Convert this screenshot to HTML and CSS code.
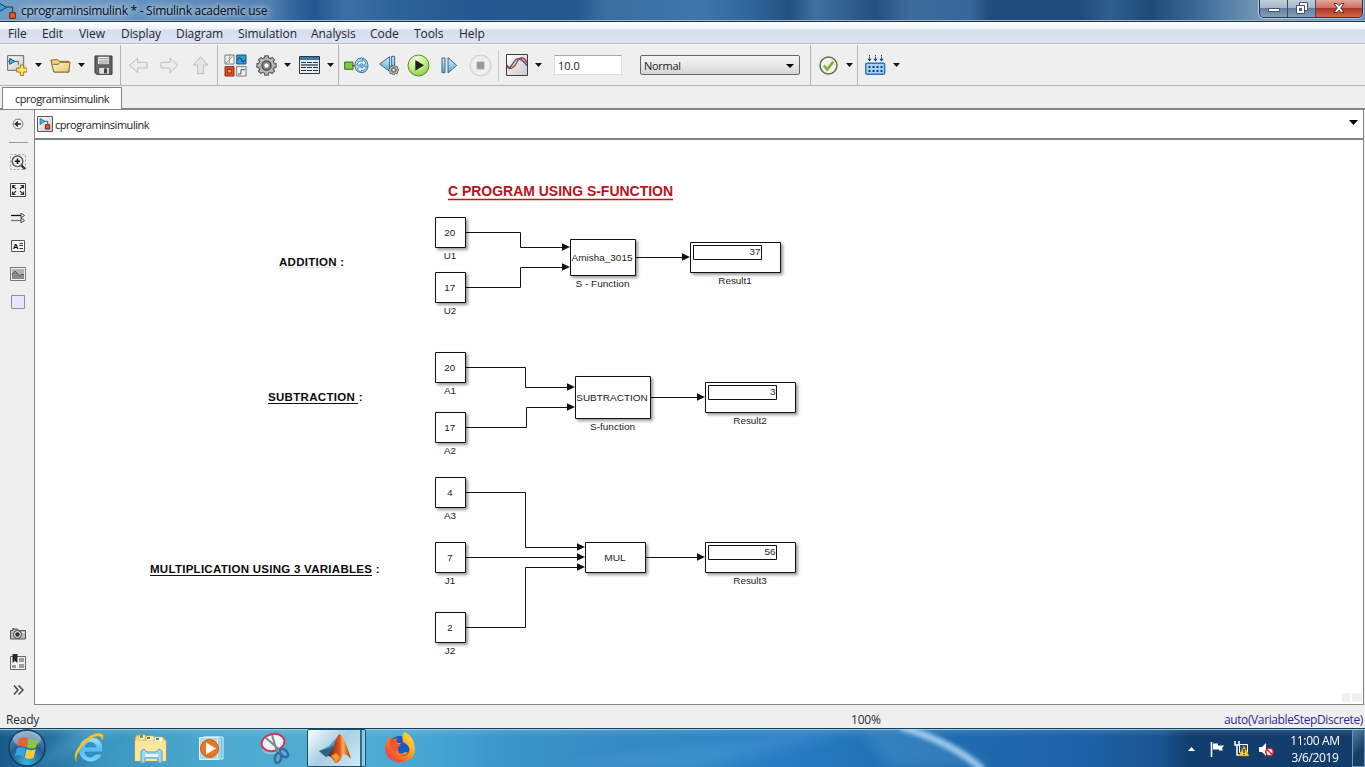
FILE: index.html
```html
<!DOCTYPE html>
<html lang="en">
<head>
<meta charset="utf-8">
<title>cprograminsimulink * - Simulink academic use</title>
<link rel="stylesheet" href="styles.css">
</head>
<body>
<svg class="defs" width="0" height="0" aria-hidden="true">
  <defs>
    <linearGradient id="gBlue" x1="0" y1="0" x2="0" y2="1"><stop offset="0" stop-color="#d8effa"/><stop offset="1" stop-color="#5fa5d3"/></linearGradient>
    <linearGradient id="gGrey" x1="0" y1="0" x2="1" y2="1"><stop offset="0" stop-color="#ffffff"/><stop offset="1" stop-color="#c9c9c9"/></linearGradient>
    <linearGradient id="gFold" x1="0" y1="0" x2="1" y2="1"><stop offset="0" stop-color="#fffbe0"/><stop offset="1" stop-color="#e9c56a"/></linearGradient>
    <radialGradient id="gPlay" cx=".4" cy=".25" r=".8"><stop offset="0" stop-color="#f7ffe8"/><stop offset=".5" stop-color="#c6f088"/><stop offset="1" stop-color="#83c83f"/></radialGradient>
    <symbol id="caret" viewBox="0 0 7 4"><path d="M0 0h7L3.5 4z" fill="#151515"/></symbol>
    <symbol id="model" viewBox="0 0 48 48">
      <path d="M1.500 1.500h45v45h-45z" fill="url(#gGrey)" stroke="#4d5a63" stroke-width="3"/>
      <path d="M9 7v19l15-10z" fill="#57b0dd" stroke="#17577d" stroke-width="2"/>
      <path d="M24 16h8v10" fill="none" stroke="#27648a" stroke-width="3"/>
      <path d="M25 26h13v13H25z" fill="#e2582c" stroke="#7e2810" stroke-width="3"/>
    </symbol>
    <symbol id="gear" viewBox="-32 -32 64 64">
      <g fill="#4a4a4a"><circle r="26"/><path id="tooth" d="M-7-31H7V31H-7z"/><use href="#tooth" transform="rotate(45)"/><use href="#tooth" transform="rotate(90)"/><use href="#tooth" transform="rotate(135)"/></g>
      <g fill="#b9b9b9"><circle r="23"/><path id="toothIn" d="M-4-28H4V28H-4z"/><use href="#toothIn" transform="rotate(45)"/><use href="#toothIn" transform="rotate(90)"/><use href="#toothIn" transform="rotate(135)"/></g>
      <circle r="14" fill="#8d8d8d" stroke="#444" stroke-width="4"/><circle r="8" fill="#fff" stroke="#555" stroke-width="2"/>
    </symbol>
  </defs>
</svg>

<div class="window">
  <header class="titlebar">
    <svg class="app-icon" width="17" height="20" viewBox="0 0 51 60"><path d="M-6 8l26 14L-6 37z" fill="#3d9fd4" stroke="#0b4268" stroke-width="3"/><path d="M21 21h17v17" fill="none" stroke="#153a55" stroke-width="3"/><path d="M29 38h17v17H29z" fill="#e95a28" stroke="#6d1f0d" stroke-width="3"/></svg>
    <h1 class="title">cprograminsimulink * - Simulink academic use</h1>
    <div class="win-buttons">
      <button class="wb" aria-label="Minimize"><svg width="12" height="6" viewBox="0 0 12 6"><path d="M.5 1.500h11v3H.5z" fill="#fff" stroke="#4a5361"/></svg></button>
      <button class="wb" aria-label="Restore"><svg width="12" height="12" viewBox="0 0 12 12"><path d="M3.500.5h8v8h-8z" fill="#fff" stroke="#4a5361"/><path d="M.5 3.500h8v8h-8z" fill="#fff" stroke="#4a5361"/><path d="M3.500 6.500h2v2h-2z" fill="#5b6a80" stroke="#4a5361"/></svg></button>
      <button class="wb close" aria-label="Close"><svg width="12" height="10" viewBox="0 0 12 10"><path d="M1 .5h3l2 2.300L8 .5h3L7.800 5 11 9.500H8L6 7.200 4 9.500H1L4.200 5z" fill="#fff" stroke="#5d2a2c"/></svg></button>
    </div>
  </header>

  <nav class="menubar">
    <span>File</span><span>Edit</span><span>View</span><span>Display</span><span>Diagram</span><span>Simulation</span><span>Analysis</span><span>Code</span><span>Tools</span><span>Help</span>
  </nav>

  <div class="toolbar">
    <svg width="20" height="21" viewBox="20 164 60 63"><path d="M22 166h48v44H22z" fill="url(#gGrey)" stroke="#666" stroke-width="3"/><path d="M28 174v18l16-9z" fill="#57b0dd" stroke="#17577d" stroke-width="3"/><path d="M44 183h10v10M22 183h6" fill="none" stroke="#27648a" stroke-width="3"/><path d="M60 194h10v9h10v12H70v10H60v-10H49v-12h11z" fill="#ffe36a" stroke="#a37a14" stroke-width="3"/></svg>
    <svg class="caret"><use href="#caret"/></svg>
    <svg width="21" height="15" viewBox="148 174 63 45"><path d="M151 180l20-1 4 5h30v32h-45z" fill="#f1cf7a" stroke="#8a6d28" stroke-width="3"/><path d="M151 181l8 35h45l4-29h-30l-5 6h-17" fill="url(#gFold)" stroke="#8a6d28" stroke-width="3"/></svg>
    <svg class="caret"><use href="#caret"/></svg>
    <svg width="19" height="20" viewBox="280 166 57 60"><path d="M283 169h51v55h-46l-5-5z" fill="#686868" stroke="#333" stroke-width="3"/><path d="M291 170h35v25h-35z" fill="#fff" stroke="#333" stroke-width="2"/><path d="M295 177h28M295 184h28M295 190h28" stroke="#666" stroke-width="2.500"/><path d="M294 203h32v21h-32z" fill="#ddd" stroke="#333" stroke-width="2"/><path d="M310 206h9v15h-9z" fill="#444"/></svg>
    <i class="sep"></i>
    <svg width="19" height="17" viewBox="386 170 57 51"><path d="M388 195l24-22v13h28v17h-28v14z" fill="#ececec" stroke="#bdbdbd" stroke-width="3"/></svg>
    <svg width="19" height="17" viewBox="478 170 57 51"><path d="M532 195l-24-22v13h-27v17h27v14z" fill="#ececec" stroke="#bdbdbd" stroke-width="3"/></svg>
    <svg width="17" height="19" viewBox="574 168 51 57"><path d="M600 170l22 25h-13v26h-18v-26h-14z" fill="#e4e4e4" stroke="#bdbdbd" stroke-width="3"/></svg>
    <i class="sep"></i>
    <svg width="23" height="23" viewBox="671 161 69 69"><path d="M674 164h27v27h-27zM709 199h28v28h-28z" fill="#f5f5f5" stroke="#777" stroke-width="3"/><path d="M674 191l13-12 12-15M687 164v24" fill="none" stroke="#888" stroke-width="2.500"/><path d="M709 164h28v27h-28z" fill="#2e9ad6" stroke="#1a5a86" stroke-width="3"/><path d="M712 178q6-13 11 0t12 0" fill="none" stroke="#08304d" stroke-width="3"/><path d="M674 199h27v28h-27z" fill="#e54e22" stroke="#8a2a10" stroke-width="3"/><path d="M682 207h11v11h-11z" fill="#f9a587" stroke="#8a2a10" stroke-width="3"/><path d="M713 221h9v-13h12" fill="none" stroke="#555" stroke-width="3"/></svg>
    <svg width="21" height="21"><use href="#gear"/></svg>
    <svg class="caret"><use href="#caret"/></svg>
    <svg width="21" height="19" viewBox="0 0 21 19"><path d="M.5.5h20v17H.5z" fill="#e7eef4" stroke="#2d3740"/><path d="M1 1h19v3H1z" fill="#3b79ad"/><path d="M2 6.500h17M2 11.500h17M2 14.500h17" stroke="#26323c" stroke-dasharray="5 1"/><path d="M2 8h17v2H2z" fill="#6c7a88"/></svg>
    <svg class="caret"><use href="#caret"/></svg>
    <i class="sep"></i>
    <svg width="25" height="17" viewBox="1031 169 75 51"><path d="M1033 184h25v22h-25z" fill="#7ec843" stroke="#39701a" stroke-width="3"/><path d="M1056 195h8" stroke="#333" stroke-width="3"/><path d="M1064 190q3-18 20-18q18 2 19 23-1 19-18 21-18-1-21-16z" fill="#a5d0ee" stroke="#3b789f" stroke-width="3"/><path d="M1070 192q3-12 17-10v-6l10 11-10 9v-7q-8-1-10 5zM1098 197q-1 14-16 12v6l-11-10 11-10v7q7 1 9-5z" fill="#e9f7ff" stroke="#28638c" stroke-width="2"/></svg>
    <svg width="20" height="21" viewBox="1136 167 60 63"><path d="M1168 172v44l-30-22zM1174 171h9v36h-9z" fill="url(#gBlue)" stroke="#31698f" stroke-width="3"/><svg x="1164" y="196" width="32" height="32"><use href="#gear"/></svg></svg>
    <svg width="23" height="23" viewBox="1219 161 69 69"><circle cx="1253.500" cy="195.500" r="31.500" fill="url(#gPlay)" stroke="#5d8a36" stroke-width="3"/><path d="M1244 179v32l26-16z" fill="#202020"/></svg>
    <svg width="17" height="17" viewBox="1321 170 51 51"><path d="M1324 173h9v44h-9zM1342 172v46l26-23z" fill="url(#gBlue)" stroke="#31698f" stroke-width="3"/></svg>
    <svg width="23" height="23" viewBox="0 0 23 23"><circle cx="11.500" cy="11.500" r="10.500" fill="#e9e9e9" stroke="#cdcdcd"/><circle cx="11.500" cy="11.500" r="8.500" fill="#f0f0f0"/><path d="M8 8h7v7H8z" fill="#999" stroke="#ababab"/></svg>
    <i class="sep short"></i>
    <svg width="23" height="23" viewBox="0 0 23 23"><path d="M.5.5h21v21H.5z" fill="url(#gGrey)" stroke="#3c3c3c"/><path d="M1 11q2 5 5 0t4.500-6 5 1 5.500 6" fill="none" stroke="#365fa5" stroke-width="1.500"/><path d="M1 11.500q1.500 4.500 5 2.500t5-6 5-4q3 0 5 5" fill="none" stroke="#bd3430" stroke-width="1.400"/></svg>
    <svg class="caret"><use href="#caret"/></svg>
    <div class="stop-time">10.0</div>
    <div class="mode"><span>Normal</span><svg width="8" height="4" viewBox="0 0 8 4"><path d="M0 0h8L4 4z"/></svg></div>
    <i class="sep"></i>
    <svg width="19" height="19" viewBox="0 0 19 19"><circle cx="9.500" cy="9.500" r="8.500" fill="#f0f2e9" stroke="#61704e" stroke-width="1.500"/><path d="M5 9.500l3.300 4 6-8" fill="none" stroke="#86ac40" stroke-width="2.600"/></svg>
    <svg class="caret"><use href="#caret"/></svg>
    <i class="sep"></i>
    <svg width="21" height="20" viewBox="0 0 21 20"><path d="M4.500 0v6M10.500 0v6M16.500 0v6" stroke="#17446a" stroke-dasharray="1.500 .7"/><path d="M2.500 3.800h4l-2 2.800zM8.500 3.800h4l-2 2.800zM14.500 3.800h4l-2 2.800z" fill="#123c60"/><rect x=".7" y="8.200" width="19" height="11" rx="1.500" fill="#a5d1f5" stroke="#2677bf" stroke-width="1.400"/><path d="M3.500 12h14M3.500 16h14" stroke="#163e6b" stroke-width="2" stroke-dasharray="2 2"/></svg>
    <svg class="caret"><use href="#caret"/></svg>
  </div>

  <div class="tabs"><div class="tab">cprograminsimulink</div></div>

  <main class="editor">
    <aside class="palette">
      <svg width="12" viewBox="0 0 12 12"><circle cx="6" cy="6" r="4.900" fill="#f8f8f8" stroke="#777"/><path d="M9 6H4M6 3.500L3.300 6 6 8.500" fill="none" stroke="#222" stroke-width="1.500"/></svg>
      <i class="rule"></i>
      <svg width="16" viewBox="0 0 16 16"><path d="M.5.5h15v15H.5z" fill="none" stroke="#999" stroke-dasharray="2 2"/><path d="M10.500 10.500l4.500 4.500" stroke="#333" stroke-width="2.400"/><circle cx="7.500" cy="7.300" r="5.300" fill="#f8f8f8" stroke="#555" stroke-width="1.400"/><path d="M4.800 7.300h5.400M7.500 4.600V10" stroke="#111" stroke-width="1.600"/></svg>
      <svg width="16" viewBox="0 0 16 14"><path d="M.5.500h15v13H.5z" fill="#fafafa" stroke="#444"/><path d="M2.500 5.500v-3h3M10.500 2.500h3v3M13.500 8.500v3h-3M5.500 11.500h-3v-3M3 3l3 3M13 3l-3 3M3 11l3-3M13 11l-3-3" fill="none" stroke="#333" stroke-width="1.200"/></svg>
      <svg width="16" viewBox="0 0 16 12"><path d="M1 3.500h11" stroke="#111" stroke-width="1.300"/><path d="M1 8.500h11" stroke="#777" stroke-width="1.300"/><path d="M11 1.200l3.500 2.300L11 5.800zM11 6.200l3.500 2.300-3.500 2.300z" fill="#fff" stroke="#444"/></svg>
      <svg width="14" viewBox="0 0 14 12"><path d="M.5.5h13v11H.5z" fill="#f8f8f8" stroke="#555"/><text x="1.800" y="9" class="pal-a">A</text><path d="M8.500 3.500H12M8.500 5.500H12M8.500 8.500H12" stroke="#333"/></svg>
      <svg width="16" viewBox="0 0 16 14"><path d="M.5.5h15v13H.5z" fill="#f2f2f2" stroke="#777"/><path d="M2 2h12v10H2z" fill="#b2b2b2"/><path d="M2 8q2.500-6 5-2t3 2.500 4-1V12H2z" fill="#8b8b8b"/><path d="M2 8q2.500-6 5-2t3 2.500 4-1" fill="none" stroke="#555"/></svg>
      <svg width="14" viewBox="0 0 14 14"><path d="M.5.5h13v13H.5z" fill="#e8e6fa" stroke="#8f8fa3"/></svg>
      <span class="spring"></span>
      <svg width="16" viewBox="0 0 16 12"><path d="M.5 2.500h2l1-1.500h4l1 1.500h7v8.500H.5z" fill="#bbb" stroke="#555"/><path d="M2 .8h2" stroke="#444"/><circle cx="7.500" cy="6.500" r="4" fill="#ddd" stroke="#444"/><circle cx="7.500" cy="6.500" r="2.200" fill="#333"/><path d="M12.500 4.500h2" stroke="#fff"/></svg>
      <svg width="16" viewBox="0 0 16 16"><path d="M.5 2.500h15v13H.5z" fill="#f4f4f4" stroke="#666"/><path d="M9 4h5v4H9zM9 10h5v4H9zM2 11h4v3H2z" fill="#9c9c9c"/><path d="M2.500 0h5v9L5 7 2.500 9z" fill="#2a2a2a"/></svg>
      <svg width="11" viewBox="0 0 11 11"><path d="M1 1l4 4.500L1 10M5.500 1l4.500 4.500L5.500 10" fill="none" stroke="#444" stroke-width="1.500"/></svg>
    </aside>

    <section class="model-pane">
      <div class="crumb">
        <svg width="16" height="16"><use href="#model"/></svg>
        <span>cprograminsimulink</span>
        <svg class="crumb-caret" width="9" height="5" viewBox="0 0 9 5"><path d="M0 0h9L4.500 5z"/></svg>
      </div>
      <svg class="canvas" viewBox="35 140 1328 564" width="1328" height="564">
        <g class="headings">
          <text x="448" y="196" textLength="225" lengthAdjust="spacingAndGlyphs" class="h-main">C PROGRAM USING S-FUNCTION</text>
          <path d="M448 199.500h225" stroke="#c01414" stroke-width="1.400"/>
          <text x="279" y="266" textLength="65">ADDITION :</text>
          <path d="M279 267.500h61" stroke="#ddd"/>
          <text x="268" y="401" textLength="94.500">SUBTRACTION :</text>
          <path d="M268 403.500h90M150 575.500h222" stroke="#111"/>
          <text x="150" y="573" textLength="229.500">MULTIPLICATION USING 3 VARIABLES :</text>
        </g>
        <g class="wires">
          <path d="M466 232.500h54.500v15H564M466 287.500h54.500v-20H564M636 257.500h48"/>
          <path d="M466 367.500h59.500v20H569M466 427.500h60.500v-20H569M651 397.500h48"/>
          <path d="M466 492.500h59.500v55H579M466 557.500h113M466 627.500h59.500v-60H579M646 557.500h53"/>
        </g>
        <path class="arrows" d="M562 243.300l8 3.700-8 3.700zM562 263.300l8 3.700-8 3.700zM682 253.300l8 3.700-8 3.700zM567 383.300l8 3.700-8 3.700zM567 403.300l8 3.700-8 3.700zM697 393.300l8 3.700-8 3.700zM577 543.300l8 3.700-8 3.700zM577 553.300l8 3.700-8 3.700zM577 563.300l8 3.700-8 3.700zM697 553.300l8 3.700-8 3.700z"/>
        <g class="blocks">
          <path d="M435.500 217.500h30v30h-30zM435.500 272.500h30v30h-30zM435.500 352.500h30v30h-30zM435.500 412.500h30v30h-30zM435.500 477.500h30v30h-30zM435.500 542.500h30v30h-30zM435.500 612.500h30v30h-30z"/>
          <path d="M570.500 239.500h65v36h-65zM575.500 376.500h75v42h-75zM585.500 542.500h60v30h-60zM690.500 242.500h90v30h-90zM705.500 382.500h90v30h-90zM705.500 542.500h90v30h-90z"/>
        </g>
        <path class="displays" d="M693.500 245.500h68v14h-68zM708.500 385.500h68v14h-68zM708.500 545.500h68v14h-68z"/>
        <g class="labels">
          <text x="449.800" y="236" textLength="11" lengthAdjust="spacingAndGlyphs">20</text><text x="450" y="259" textLength="12.500" lengthAdjust="spacingAndGlyphs">U1</text>
          <text x="449.800" y="291" textLength="11" lengthAdjust="spacingAndGlyphs">17</text><text x="450" y="314" textLength="12.500" lengthAdjust="spacingAndGlyphs">U2</text>
          <text x="449.800" y="371" textLength="11" lengthAdjust="spacingAndGlyphs">20</text><text x="450" y="394" textLength="12" lengthAdjust="spacingAndGlyphs">A1</text>
          <text x="449.800" y="431" textLength="11" lengthAdjust="spacingAndGlyphs">17</text><text x="450" y="454" textLength="12" lengthAdjust="spacingAndGlyphs">A2</text>
          <text x="449.800" y="496">4</text><text x="450" y="519" textLength="12" lengthAdjust="spacingAndGlyphs">A3</text>
          <text x="449.800" y="561">7</text><text x="450" y="584" textLength="10.500" lengthAdjust="spacingAndGlyphs">J1</text>
          <text x="449.800" y="631">2</text><text x="450" y="654" textLength="10.500" lengthAdjust="spacingAndGlyphs">J2</text>
          <text x="602" y="261" textLength="61" lengthAdjust="spacingAndGlyphs">Amisha_3015</text><text x="602.500" y="287" textLength="54" lengthAdjust="spacingAndGlyphs">S - Function</text>
          <text x="612" y="401" textLength="71.500" lengthAdjust="spacingAndGlyphs">SUBTRACTION</text><text x="612.500" y="430" textLength="45" lengthAdjust="spacingAndGlyphs">S-function</text>
          <text x="615" y="561" textLength="21.500" lengthAdjust="spacingAndGlyphs">MUL</text>
          <text x="735" y="284" textLength="33.500" lengthAdjust="spacingAndGlyphs">Result1</text><text x="750" y="424" textLength="33.500" lengthAdjust="spacingAndGlyphs">Result2</text><text x="750" y="584" textLength="33.500" lengthAdjust="spacingAndGlyphs">Result3</text>
          <text x="755" y="255" textLength="11" lengthAdjust="spacingAndGlyphs">37</text><text x="773" y="395">3</text><text x="770" y="555" textLength="11" lengthAdjust="spacingAndGlyphs">56</text>
        </g>
        <path d="M1342 693h8v9h-8zM1352 693h10v9h-10z" fill="#efefef"/>
      </svg>
    </section>
  </main>

  <footer class="status"><span>Ready</span><span class="zoom">100%</span><span class="solver">auto(VariableStepDiscrete)</span></footer>
</div>

<div class="taskbar">
  <svg class="streaks" viewBox="0 0 1365 39" preserveAspectRatio="none">
    <defs><filter id="soft"><feGaussianBlur stdDeviation="2"/></filter><filter id="wide" x="-20%" width="140%"><feGaussianBlur stdDeviation="6"/></filter></defs>
    <g filter="url(#wide)"><path d="M30 39L80 0h40L40 39z" fill="#7cc4e6" opacity=".25"/><path d="M560 39L800 0h70L700 39z" fill="#8bcdf2" opacity=".14"/><path d="M860 0h60l70 39H890z" fill="#67a6dc" opacity=".3"/></g>
    <path d="M901-2q52 16 82 44" fill="none" stroke="#b4daf8" stroke-width="7" opacity=".85" filter="url(#soft)"/>
  </svg>
  <div class="apps">
    <svg width="38" height="38" viewBox="0 0 38 38"><defs><radialGradient id="orb" cx=".5" cy=".9" r=".9"><stop offset="0" stop-color="#35b5e4"/><stop offset=".55" stop-color="#245c8d"/><stop offset="1" stop-color="#6d9bbd"/></radialGradient></defs><circle cx="19" cy="19" r="18" fill="url(#orb)" stroke="#153c5d" stroke-width="1.500"/><ellipse cx="19" cy="10" rx="14" ry="8" fill="#fff" opacity=".32"/><path d="M11 10q4.500-3 9-.5l-2 8.500q-4.500-2.500-9 0z" fill="#ec612c"/><path d="M21 10q5 2.500 9 0l-2 8.500q-4 2-9 0z" fill="#8cc83c"/><path d="M8.700 19.500q4.500-2.500 9 0l-2 8.500q-4.500-3-9-.5z" fill="#3aa0e8"/><path d="M18.700 20q5 2.500 9 0l-2 8.500q-4 2.500-9 0z" fill="#fccc36"/></svg>
    <svg width="32" height="32" viewBox="0 0 32 32"><defs><linearGradient id="ie" x1="0" y1="0" x2="0" y2="1"><stop offset="0" stop-color="#a4e6ff"/><stop offset=".5" stop-color="#55bdf3"/><stop offset="1" stop-color="#7ad4fa"/></linearGradient></defs><path d="M17.500 5A12.500 12.500 0 1 0 29.500 22H22.500Q20.500 25 17.500 25 12.500 25 12 20H30Q31 5 17.500 5zM12.200 15Q13 10.500 17.500 10.500T23 15z" fill="url(#ie)" fill-rule="evenodd" stroke="#2b84c4" stroke-width=".8"/><path d="M4 30Q-2 24 8 12T28 1.500q4 1 1 7 0-5-5-4.500Q15 6 8 16T4 30z" fill="#f9cd30" stroke="#d29b18" stroke-width=".6"/></svg>
    <svg width="33" height="32" viewBox="0 0 33 32"><path d="M1 6l2-3h8l2 3h17l2 3v20H1z" fill="#f4d981" stroke="#c79a3f"/><path d="M5 3h6v5H5zM12 4h8v5h-8zM20 5h9v5h-9z" fill="#fff9dc" stroke="#cfae5c" stroke-width=".7"/><path d="M6 3h3v3H6z" fill="#4caf32"/><path d="M13 5h3v2h-3z" fill="#d4532b"/><path d="M22 6h3v2h-3z" fill="#3481bc"/><path d="M1 9h31v20H1z" fill="#fbe8a0" opacity=".85"/><path d="M7 31V19l3-2 3 3h9l3-3 3 2v12h-4v-5H11v5z" fill="#9bd6f2" stroke="#5b9fc7"/><path d="M11 22h13v3H11z" fill="#e1f5fd"/></svg>
    <svg width="26" height="26" viewBox="0 0 26 26"><path d="M6 2h18v22H6z" fill="#78bedf" stroke="#d8f1fb"/><path d="M4 2h17v22H4z" fill="#8bcbe7" stroke="#c4e9f7"/><path d="M.5 2.500h18v22H.5z" fill="#add9ec" stroke="#def3fb"/><circle cx="10.500" cy="13.500" r="9" fill="#ee7420" stroke="#cc5b12"/><path d="M7 7.500v12l10-6z" fill="#fff"/></svg>
    <svg width="32" height="33" viewBox="0 0 32 33"><path d="M2 17q2 7 13 5l8-4V9z" fill="#adcbd9" opacity=".7"/><ellipse cx="13" cy="10.500" rx="11.500" ry="8.500" transform="rotate(-12 13 10.500)" fill="#f0f5fa" stroke="#cf3852" stroke-width="2"/><path d="M6 6l15 13M12 3l6 20" stroke="#788792" stroke-width="2"/><ellipse cx="24" cy="21" rx="3" ry="5" transform="rotate(-45 24 21)" fill="#6ba9cf" stroke="#2c70a7" stroke-width="2.600"/><ellipse cx="18" cy="26" rx="3" ry="5" transform="rotate(12 18 26)" fill="#6ba9cf" stroke="#2c70a7" stroke-width="2.600"/></svg>
    <div class="active-app">
      <svg width="32" height="31" viewBox="0 0 32 31"><defs><linearGradient id="peak"><stop offset="0" stop-color="#5e2218"/><stop offset=".5" stop-color="#e05420"/><stop offset=".65" stop-color="#ffad52"/><stop offset="1" stop-color="#a32b13"/></linearGradient></defs><path d="M0 18l10-5 7-8-5 17-5 2z" fill="#4b9dcc"/><path d="M0 18l7 6 5-3 3-9-5 3z" fill="#2b648c"/><path d="M21 1q-3 0-7 14l-5 8q4 0 7 7 5 0 8-9 4 0 8 5Q26 5 21 1z" fill="url(#peak)"/><path d="M12 23q3 2 4 7 3-1 5-6l-4-4z" fill="#f39a2b"/></svg>
    </div>
    <svg width="32" height="33" viewBox="0 0 32 33"><defs><linearGradient id="fox" x1="1" y1="0" x2="0" y2="1"><stop offset="0" stop-color="#fff04a"/><stop offset=".45" stop-color="#ff9818"/><stop offset="1" stop-color="#e9234e"/></linearGradient></defs><circle cx="16" cy="16" r="12" fill="#145bc2"/><path d="M19 10q-2-8 2-10 8 5 9 12 3 9-4 15-10 7-20 0Q-2 19 3 9l3-5 2 4 5-2q-3 3 1 5h3l-4 4 1 2q0 6 5 4 3-2 5 0-4 4-9 2 7 3 10-3 2-6-6-10z" fill="url(#fox)"/><path d="M6 5l3 3 5-1q-3 3 0 5l3 1-4 3 1 2-3 2q-7-3-5-15z" fill="#f55429"/></svg>
  </div>
  <div class="tray">
    <svg width="7" height="4" viewBox="0 0 7 4"><path d="M0 4l3.500-4L7 4z" fill="#fff"/></svg>
    <svg width="15" height="15" viewBox="0 0 15 15"><path d="M1.500 0v15" stroke="#fff" stroke-width="1.600"/><path d="M3 1.500h5v2h6l-2 3 1 2H9v-1H3z" fill="#fff"/></svg>
    <svg width="15" height="16" viewBox="0 0 15 16"><path d="M5.500 3.500h8v8h-8z" fill="#34516c" stroke="#fff"/><path d="M1 0v4h4V0M3 4v10h5" fill="none" stroke="#fff" stroke-width="1.500"/><path d="M10 5l5 10H5z" fill="#ffd42c" stroke="#a58210" stroke-width=".6"/><path d="M10 8v4M10 13v1" stroke="#222" stroke-width="1.300"/></svg>
    <svg width="15" height="15" viewBox="0 0 15 15"><path d="M0 5h3l4-4v13l-4-4H0z" fill="#fff"/><circle cx="10.500" cy="10" r="3.700" fill="#fff" stroke="#d7272d" stroke-width="1.600"/><path d="M8 7.500l5 5" stroke="#d7272d" stroke-width="1.600"/></svg>
  </div>
  <div class="clock"><span>11:00 AM</span><span>3/6/2019</span></div>
  <div class="peek"></div>
</div>
</body>
</html>
```
FILE: styles.css
```css
* { box-sizing: border-box; }
body {
  margin: 0;
  width: 1365px;
  height: 767px;
  overflow: hidden;
  background: #efefef;
  color: #1c1c1c;
  font-family: "Open Sans", "Noto Sans", sans-serif;
  font-size: 12px;
}
svg { display: block; }
.defs { position: absolute; }
.window { display: flex; flex-direction: column; height: 728px; }

.titlebar {
  display: flex;
  align-items: flex-start;
  height: 22px;
  border-bottom: 1px solid #1c3450;
  box-shadow: inset 0 -1px #9ab4cf;
  background:
    linear-gradient(90deg, #6f9cc6 0, #6594c0 120px, #4e80b3 270px, #2d6098 300px, #245890 315px, #3b6fa5 345px, #2d6298 400px, #24578f 480px, #24588e 575px, #396e9f 605px, #4076a8 700px, #30669a 750px, #24517f 790px, #40709f 815px, #25507f 875px, #3c6b9c 910px, #386899 970px, #204b7c 990px, #1f4b7d 1080px, #305f8f 1110px, #1f4a78 1150px, #3d6c98 1200px, #7698b7 1260px, #668caf 1365px);
}
.title {
  margin: 2px 0 0 4px;
  padding: 0;
  font-size: 12px;
  font-weight: 400;
  line-height: 18px;
  color: #0b0b10;
  letter-spacing: -.28px;
  text-shadow: 0 0 6px rgba(220, 235, 248, .9), 0 0 10px rgba(220, 235, 248, .8), 0 0 14px rgba(220, 235, 248, .6);
}
.win-buttons {
  display: flex;
  width: 104px;
  height: 18px;
  margin-left: auto;
  margin-right: 2px;
  border: 1px solid #26364a;
  border-top: 0;
  border-radius: 0 0 5px 5px;
  overflow: hidden;
  box-shadow: 0 0 0 1px rgba(215, 230, 243, .65);
}
.wb {
  display: flex;
  align-items: center;
  justify-content: center;
  width: 28px;
  padding: 0 0 2px;
  border: 0;
  border-right: 1px solid #334c68;
  background: linear-gradient(#c1cedb, #a6b8ca 45%, #637f9f 50%, #859fb9);
}
.wb:first-child { padding-top: 4px; }
.wb.close { flex: 1; border: 0; background: linear-gradient(#e2a89b, #cb7163 45%, #b23322 50%, #cf6a49); }

.menubar {
  display: grid;
  grid-template-columns: 34px 37px 42px 55px 62px 73px 59px 44px 45px 40px;
  height: 22px;
  padding-left: 8px;
  line-height: 23px;
  border-bottom: 1px solid #b6b9c0;
  background: linear-gradient(#fff 0, #eff2f8 7px, #d5deed 8px, #dde4f6 21px);
  color: #26262e;
  letter-spacing: -.07px;
}

.toolbar {
  display: grid;
  grid-template-columns: 28px 15px 28px 16px 26px 9px 31px 32px 25px 7px 32px 28px 15px 28px 11px 6px 35px 28px 34px 28px 29px 8px 29px 19px 86px 170px 9px 27px 11px 8px 28px 8px;
  align-items: center;
  height: 42px;
  padding-left: 7px;
  border-top: 1px solid #fff;
  border-bottom: 1px solid #b4b4b4;
  background: #efefef;
}
.caret { width: 7px; height: 4px; }
.sep { width: 1px; height: 100%; background: #b4b4b4; }
.sep.short { height: 31px; background: #c8c8c8; }
.stop-time, .mode { font-size: 11px; line-height: 20px; }
.stop-time { width: 68px; height: 20px; padding-left: 3px; background: #fff; border: 1px solid #dcdcdc; border-top-color: #aaa; }
.mode {
  display: flex;
  align-items: center;
  justify-content: space-between;
  width: 160px;
  height: 20px;
  padding: 1px 5px 0 3px;
  border: 1px solid #666;
  border-radius: 2px;
  background: linear-gradient(#f3f3f3, #e9e9e9 50%, #d5d5d5);
  letter-spacing: -.7px;
}
.mode span { letter-spacing: -.3px; }

.tabs { display: flex; align-items: flex-end; height: 24px; padding-left: 2px; background: linear-gradient(#eee 22px, #858585 22px); }
.tab { width: 120px; height: 22px; margin-bottom: 1px; padding-left: 12px; border: 1px solid #858585; border-bottom: 0; background: #fff; font-size: 11px; line-height: 22px; letter-spacing: -.46px; white-space: nowrap; }

.editor { display: flex; height: 595px; }
.palette { display: flex; flex-direction: column; align-items: center; width: 34px; padding: 0 0 1px 2px; }
.palette svg { height: 28px; flex: none; }
.palette .rule { width: 19px; height: 1px; margin: 4px 0 5px; background: #999; }
.palette .spring { flex: 1; }
.pal-a { font: bold 8px "Liberation Sans", sans-serif; }
.model-pane { width: 1330px; border-left: 1px solid #858585; border-right: 1px solid #858585; border-bottom: 1px solid #858585; background: #fff; }
.crumb { display: flex; align-items: center; gap: 2px; height: 30px; padding: 1px 5px 1px 2px; border-bottom: 2px solid #858585; font-size: 11px; letter-spacing: -.46px; }
.crumb-caret { margin-left: auto; margin-top: -4px; }

.canvas { font-family: "Liberation Sans", Arial, sans-serif; font-size: 9.5px; }
.headings { font-size: 11.5px; font-weight: 700; fill: #0b0b0b; }
.h-main { font-size: 14px; fill: #b81318; }
.wires { fill: none; stroke: #111; stroke-width: 1; }
.arrows { fill: #111; }
.blocks { fill: #fff; stroke: #111; filter: drop-shadow(2px 2px 1.5px rgba(0, 0, 0, .4)); }
.displays { fill: #fff; stroke: #111; }
.labels { text-anchor: middle; fill: #1c1c1c; }

.status { display: grid; grid-template-columns: 845px 1fr auto; height: 23px; padding: 0 2px 0 6px; line-height: 29px; background: #efefef; color: #2a2a2a; letter-spacing: -.2px; }
.solver { color: #2c2a90; letter-spacing: -.38px; }

.taskbar {
  position: relative;
  display: grid;
  grid-template-columns: 1188px 95px 64px 1fr;
  height: 39px;
  border-top: 1px solid #16405a;
  box-shadow: inset 0 1px #9bcbe5;
  background:
    linear-gradient(rgba(255, 255, 255, .13), transparent 8px),
    linear-gradient(90deg, #175a8c 0, #27719f 50px, #3a95be 100px, #4ba9ce 210px, #50aed2 340px, #46a6d3 430px, #3b96ca 500px, #368bc5 610px, #2d88c4 700px, #277bc2 790px, #2174b7 860px, #1f69ad 980px, #1d60a5 1090px, #1a5491 1160px, #103d6d 1190px, #123d6b 1365px);
}
.streaks { position: absolute; inset: 0; width: 100%; height: 100%; }
.apps { position: relative; display: grid; grid-template-columns: 65px 61px 65px 61px 47px 77px 40px; align-items: center; padding-left: 8px; }
.active-app { position: relative; display: flex; align-items: center; width: 59px; height: 38px; padding-left: 11px; border: 1px solid #1d506f; border-radius: 2px; background: linear-gradient(90deg, transparent 52px, #326b8e 52px 54px, #93cae5 54px), linear-gradient(135deg, #fafdff, #a7cfe2 45%, #d6eef7); }
.tray { position: relative; display: grid; grid-template-columns: 22px 24px 25px 15px; align-items: center; padding-top: 2px; }
.clock { position: relative; display: flex; flex-direction: column; align-items: center; padding-top: 3px; color: #fff; font-size: 12px; line-height: 17px; letter-spacing: -.35px; }
.peek { position: relative; width: 13px; margin-left: 5px; border: 1px solid #6c94b5; border-top-color: #a8c4db; background: linear-gradient(135deg, #567fa4, #153e68 60%); }
```
